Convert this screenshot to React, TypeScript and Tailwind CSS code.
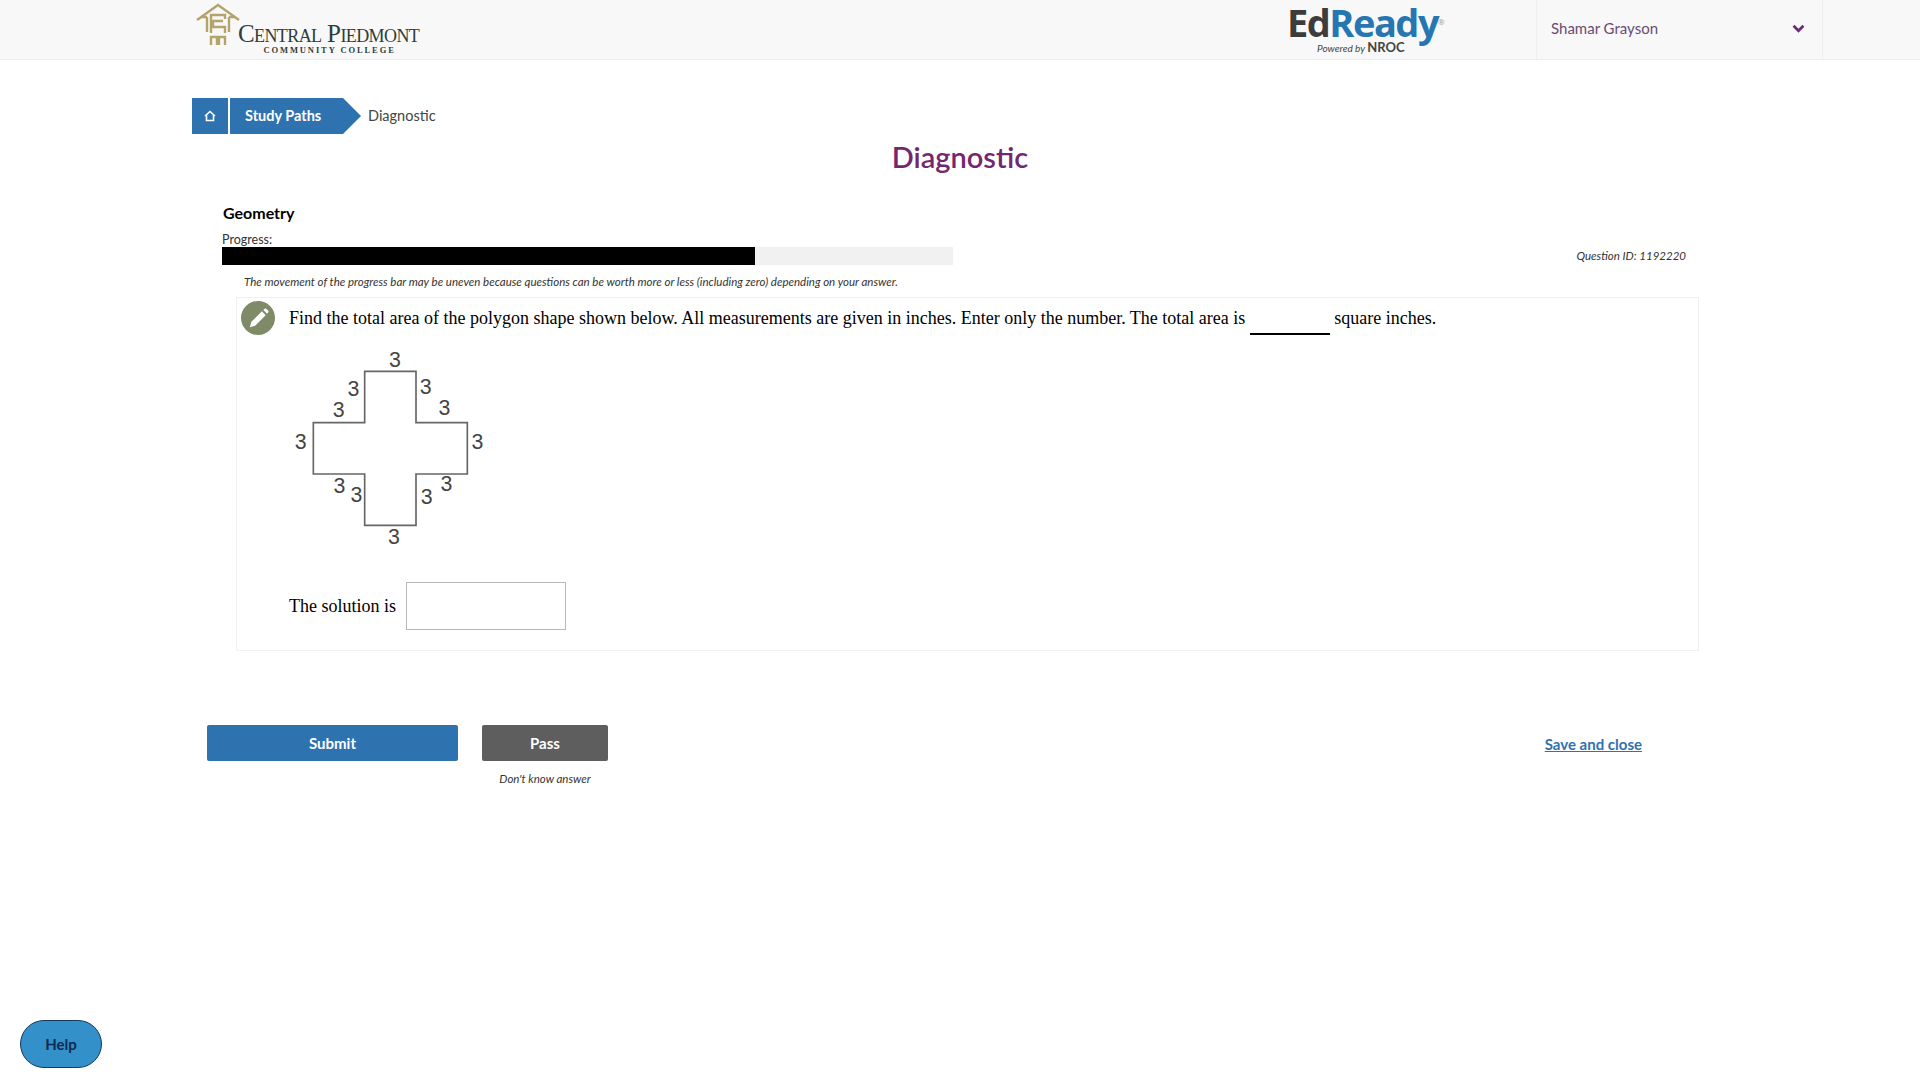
import React from 'react';

const sans = 'font-["Lato","Open_Sans",sans-serif]';

const labels = [
  [345, 55], [220, 143], [176, 205], [437, 137], [493, 198], [62, 302],
  [592, 300], [178, 432], [229, 460], [440, 465], [499, 426], [342, 585],
];

const CollegeMark = () => (
  <svg viewBox="0 0 44 44" className="w-[44px] h-[44px]" fill="none" stroke="#b5a36c" strokeWidth="2.4">
    <path d="M1 17 L22 2 L43 17" />
    <path d="M5 14 H11 M33 14 H39 M11 14 V29 M33 14 V29" />
    <path d="M15 30 V12 H29 V16 M29 30 V24 H17 V18 H27" />
    <path d="M15 42 V34 H21 V42 M23 42 V34 H29 V42" />
  </svg>
);

const Figure = () => (
  <svg viewBox="0 0 660 630" className="w-[220px] h-[210px]">
    <path
      d="M254 91 H408 V245 H562 V399 H408 V553 H254 V399 H100 V245 H254 Z"
      fill="none"
      stroke="#666"
      strokeWidth="5"
    />
    {labels.map(([x, y], i) => (
      <text key={i} x={x} y={y + 23} textAnchor="middle" fontSize="64" fontFamily="Liberation Sans" fill="#444">3</text>
    ))}
  </svg>
);

export default function App() {
  return (
    <div className={`relative min-h-[1080px] bg-white ${sans}`}>
      <header className="h-[60px] bg-[#f8f8f8] border-b border-[#eeeeee] flex">
        <div className="ml-[196px] pt-[3px] flex items-start">
          <CollegeMark />
          <div className="ml-[-2px] mt-[20px] font-['Liberation_Serif',serif] text-[#2e3d3c] text-center">
            <div className="text-[25px] leading-[22px] [font-variant:small-caps] tracking-[-0.6px] whitespace-nowrap">Central Piedmont</div>
            <div className="text-[8.5px] leading-[10px] font-bold tracking-[1.9px] ml-[2px] whitespace-nowrap">COMMUNITY COLLEGE</div>
          </div>
        </div>
        <div className="ml-auto flex">
          <div className="w-[249px] pt-[1px] flex flex-col items-start">
            <div className="text-[38px] leading-[42px] font-bold font-['Open_Sans',sans-serif] tracking-[-1.5px] whitespace-nowrap">
              <span className="text-[#3c3c3c]">Ed</span>
              <span className="text-[#2676b2]">Ready</span>
              <span className="text-[8px] align-top text-[#999] font-normal tracking-normal">®</span>
            </div>
            <div className="ml-[30px] mt-[-3px] leading-[12px] whitespace-nowrap text-[#444]">
              <span className="text-[10px] italic">Powered by </span>
              <span className="text-[13px] font-bold">NROC</span>
            </div>
          </div>
          <div className="w-[287px] border-x border-[#eeeeee] flex items-center pl-[14px] pr-[17px] pb-[2px]">
            <span className="text-[15px] text-[#6b4a72]">Shamar Grayson</span>
            <svg viewBox="0 0 14 10" className="ml-auto w-[13px] h-[9px]" fill="none" stroke="#6e2a7c" strokeWidth="3">
              <path d="M1.5 2 L7 7.5 L12.5 2" />
            </svg>
          </div>
        </div>
        <div className="w-[97px]" />
      </header>

      <nav className="ml-[192px] mt-[38px] flex items-center h-[36px]">
        <div className="w-[36px] h-full bg-[#2f72b0] flex items-center justify-center">
          <svg viewBox="0 0 12 12" className="w-[12px] h-[12px]" fill="none" stroke="white" strokeWidth="1.6">
            <path d="M1 6 L6 1.5 L11 6 M2.5 5 V10.5 H9.5 V5" />
          </svg>
        </div>
        <div className="ml-[2px] w-[131px] h-full bg-[#2f72b0] [clip-path:polygon(0_0,113px_0,100%_50%,113px_100%,0_100%)] flex items-center pl-[15px]">
          <span className="text-white text-[14.5px] font-bold">Study Paths</span>
        </div>
        <span className="ml-[7px] text-[14.5px] text-[#444]">Diagnostic</span>
      </nav>

      <h1 className="mt-[4px] text-center text-[29px] leading-[38px] font-semibold text-[#74276f]">Diagnostic</h1>

      <section className="ml-[222px] mr-[222px] mt-[27px]">
        <h2 className="ml-[1px] text-[16px] leading-[20px] font-bold text-black">Geometry</h2>
        <div className="mt-[9px] text-[12.5px] leading-[15px] text-[#333]">Progress:</div>
        <div className="flex items-center">
          <div className="w-[731px] h-[18px] bg-[#f1f1f1]">
            <div className="w-[533px] h-full bg-black" />
          </div>
          <span className="ml-auto mr-[12px] text-[11.5px] italic text-[#333]">Question ID: 1192220</span>
        </div>
        <p className="ml-[22px] mt-[10px] text-[11.5px] leading-[14px] italic text-[#333]">
          The movement of the progress bar may be uneven because questions can be worth more or less (including zero) depending on your answer.
        </p>
      </section>

      <section className="ml-[236px] mt-[8px] w-[1463px] h-[354px] border border-[#f0f0f0] flex font-['Liberation_Serif',serif] text-black">
        <div className="ml-[4px] mt-[3px] w-[34px] h-[34px] rounded-full bg-[#7f8a68] flex items-center justify-center shrink-0">
          <svg viewBox="0 0 24 24" className="w-[23px] h-[23px]" fill="white">
            <path d="M3 21 L4.5 15.5 L15.5 4.5 L19.5 8.5 L8.5 19.5 Z M17 3 L18.5 1.8 C19 1.4 19.6 1.4 20 1.8 L22.2 4 C22.6 4.4 22.6 5 22.2 5.5 L21 7 Z" />
          </svg>
        </div>
        <div className="ml-[14px] flex flex-col">
          <p className="mt-[9px] text-[18px] leading-[22px] whitespace-nowrap">
            Find the total area of the polygon shape shown below. All measurements are given in inches. Enter only the number. The total area is{' '}
            <span className="inline-block w-[80px] border-b-2 border-black align-[-4px]">&nbsp;</span> square inches.
          </p>
          <div className="mt-[6px] ml-[-9px]">
            <Figure />
          </div>
          <div className="mt-[31px] flex items-center">
            <span className="text-[18px]">The solution is</span>
            <input className="ml-[10px] w-[160px] h-[48px] border border-[#b8b8b8] bg-white" />
          </div>
        </div>
      </section>

      <div className="ml-[207px] mr-[278px] mt-[74px] flex items-start">
        <button className="w-[251px] h-[36px] rounded-[2px] bg-[#2f72b0] text-white text-[15px] font-bold">Submit</button>
        <div className="ml-[24px] flex flex-col items-center">
          <button className="w-[126px] h-[36px] rounded-[2px] bg-[#5e5e5e] text-white text-[15px] font-bold">Pass</button>
          <span className="mt-[9px] text-[11.5px] italic text-[#333]">Don't know answer</span>
        </div>
        <a href="#" className="ml-auto mt-[8px] text-[15px] font-bold text-[#2f72b0] underline">Save and close</a>
      </div>

      <button className="absolute left-[20px] top-[1020px] w-[82px] h-[48px] rounded-full bg-[#3390c8] border border-[#123a63] text-[#0f2b52] text-[15px] font-bold">
        Help
      </button>
    </div>
  );
}
